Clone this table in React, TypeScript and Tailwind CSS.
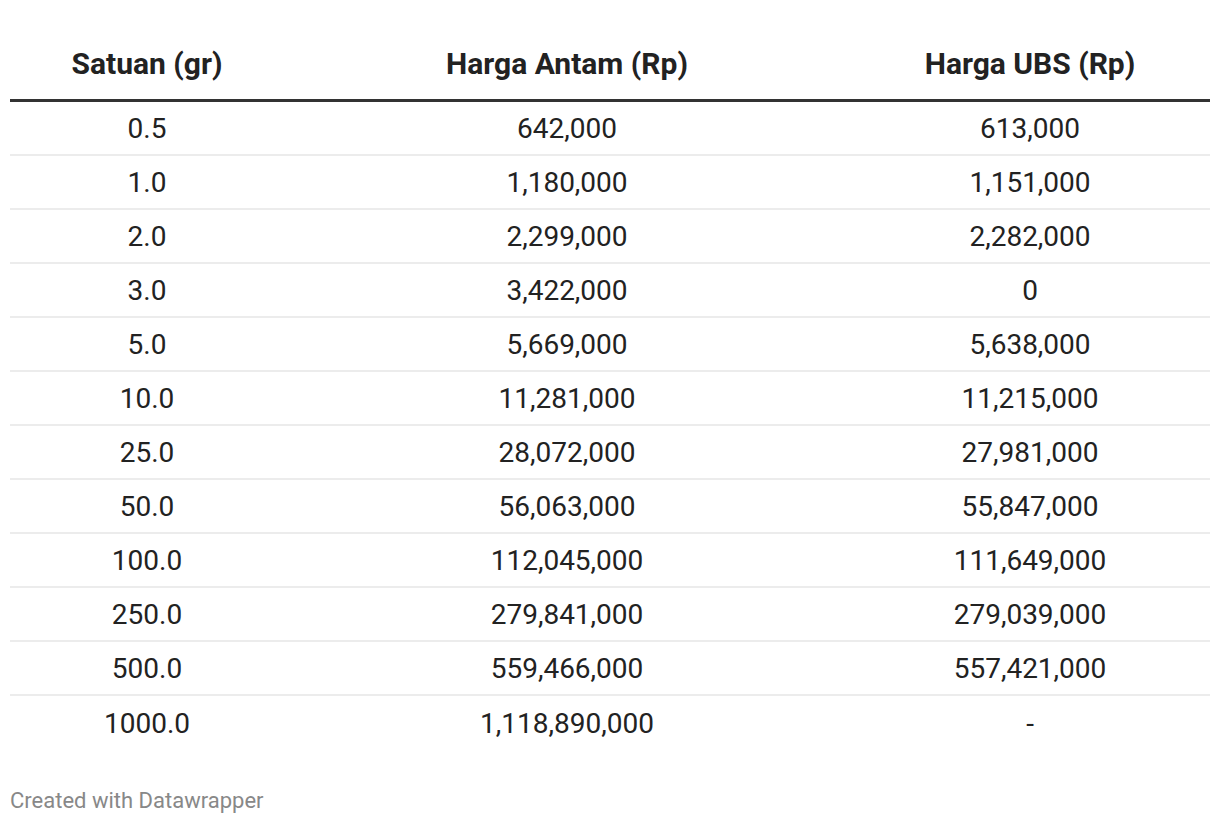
const rows: [string, string, string][] = [
  ["0.5", "642,000", "613,000"],
  ["1.0", "1,180,000", "1,151,000"],
  ["2.0", "2,299,000", "2,282,000"],
  ["3.0", "3,422,000", "0"],
  ["5.0", "5,669,000", "5,638,000"],
  ["10.0", "11,281,000", "11,215,000"],
  ["25.0", "28,072,000", "27,981,000"],
  ["50.0", "56,063,000", "55,847,000"],
  ["100.0", "112,045,000", "111,649,000"],
  ["250.0", "279,841,000", "279,039,000"],
  ["500.0", "559,466,000", "557,421,000"],
  ["1000.0", "1,118,890,000", "-"],
];

export default function App() {
  return (
    <div className="w-[1220px] h-[824px] bg-white px-[10px] font-['Roboto',sans-serif] text-[#222]">
      <div className="grid grid-cols-[274px_566px_360px] items-end h-[102px] border-b-[3px] border-[#333] pb-[18px] text-[30px] font-bold leading-[34px]">
        <div className="text-center">Satuan (gr)</div>
        <div className="text-center">Harga Antam (Rp)</div>
        <div className="text-center">Harga UBS (Rp)</div>
      </div>
      {rows.map((r, i) => (
        <div
          key={r[0]}
          className={`grid grid-cols-[274px_566px_360px] items-center pt-[1px] text-[28px] leading-[32px] ${
            i < rows.length - 1 ? "h-[54px] border-b-2 border-[#ececec]" : "h-[54px]"
          }`}
        >
          <div className="text-center">{r[0]}</div>
          <div className="text-center">{r[1]}</div>
          <div className="text-center">{r[2]}</div>
        </div>
      ))}
      <div className="mt-[38px] text-[22px] leading-[26px] text-[#888]">Created with Datawrapper</div>
    </div>
  );
}
